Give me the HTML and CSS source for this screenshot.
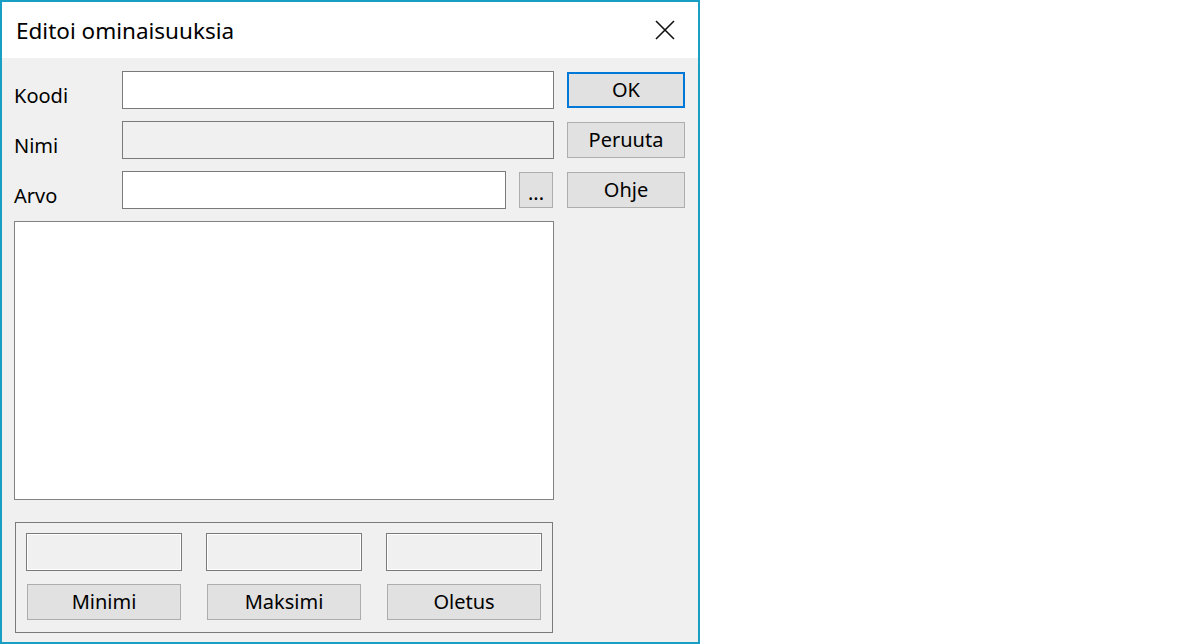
FILE: index.html
```html
<!DOCTYPE html>
<html lang="fi">
<head>
    <meta charset="UTF-8">
    <title>Editoi ominaisuuksia</title>
    <link rel="stylesheet" href="styles.css">
</head>
<body>
    <div class="dialog">
        <!-- Title bar -->
        <div class="titlebar">
            <span class="title">Editoi ominaisuuksia</span>
            <button class="close" aria-label="Sulje">
                <svg width="20" height="20" viewBox="0 0 20 20">
                    <path d="M1 1 L19 19 M19 1 L1 19" stroke="#111" stroke-width="1.6" fill="none"/>
                </svg>
            </button>
        </div>

        <div class="dialog-body">
            <div class="main">
                <div class="row">
                    <label for="koodi">Koodi</label>
                    <input type="text" id="koodi" class="edit">
                </div>
                <div class="row">
                    <label for="nimi">Nimi</label>
                    <input type="text" id="nimi" class="edit readonly" readonly>
                </div>
                <div class="row">
                    <label for="arvo">Arvo</label>
                    <input type="text" id="arvo" class="edit short">
                    <button class="btn browse">...</button>
                </div>

                <textarea class="memo"></textarea>

                <!-- Limits group -->
                <div class="group">
                    <div class="limit">
                        <div class="static"></div>
                        <button class="btn">Minimi</button>
                    </div>
                    <div class="limit">
                        <div class="static"></div>
                        <button class="btn">Maksimi</button>
                    </div>
                    <div class="limit">
                        <div class="static"></div>
                        <button class="btn">Oletus</button>
                    </div>
                </div>
            </div>

            <div class="side">
                <button class="btn default">OK</button>
                <button class="btn">Peruuta</button>
                <button class="btn">Ohje</button>
            </div>
        </div>
    </div>
</body>
</html>
```

FILE: styles.css
```css
/* Dialog styles */
* {
    box-sizing: border-box;
}

body {
    margin: 0;
    background-color: #fff;
    font-family: "Noto Sans", "Open Sans", sans-serif;
    font-size: 20px;
    color: #000;
}

.dialog {
    width: 700px;
    height: 644px;
    border: 2px solid #1a9fc4;
    background-color: #f0f0f0;
    display: flex;
    flex-direction: column;
}

.titlebar {
    height: 56px;
    background-color: #fff;
    display: flex;
    align-items: center;
    justify-content: space-between;
    padding-left: 14px;
}

.title {
    font-size: 22.5px;
    padding-top: 1px;
}

.close {
    border: none;
    background: none;
    padding: 0;
    width: 20px;
    height: 20px;
    margin-right: 23px;
    display: flex;
}

.dialog-body {
    flex: 1;
    display: flex;
    gap: 13px;
    padding: 13px 0 0 12px;
}

.main {
    width: 540px;
    display: flex;
    flex-direction: column;
}

.row {
    height: 38px;
    display: flex;
    margin-bottom: 12px;
}

.row label {
    width: 108px;
    align-self: flex-end;
    line-height: 1;
    padding-bottom: 3px;
}

.edit {
    width: 432px;
    height: 38px;
    margin: 0;
    border: 1px solid #7a7a7a;
    background-color: #fff;
    font: inherit;
    padding: 0 4px;
    outline: none;
}

.edit.readonly {
    background-color: #f0f0f0;
}

.edit.short {
    width: 384px;
}

.btn {
    height: 36px;
    margin: 0;
    padding: 0;
    border: 1px solid #adadad;
    background-color: #e1e1e1;
    font: inherit;
    color: #000;
    line-height: 1;
}

.browse {
    width: 34px;
    margin-left: 13px;
    align-self: center;
    padding-top: 6px;
}

.memo {
    width: 540px;
    height: 279px;
    margin: 0;
    border: 1px solid #828282;
    background-color: #fff;
    resize: none;
    font: inherit;
}

.group {
    margin: 22px 1px 0;
    height: 111px;
    border: 1px solid #7a7a7a;
    padding: 10px 10px 0;
    display: flex;
    gap: 24px;
}

.limit {
    width: 156px;
    display: flex;
    flex-direction: column;
}

.static {
    height: 38px;
    border: 1px solid #7a7a7a;
    box-shadow: inset 0 0 0 1px #fff;
}

.limit .btn {
    margin: 13px 1px 0;
}

.side {
    width: 118px;
    display: flex;
    flex-direction: column;
    gap: 14px;
    padding-top: 1px;
}

.side .btn {
    width: 118px;
}

.btn.default {
    border: 2px solid #0078d7;
}
```
